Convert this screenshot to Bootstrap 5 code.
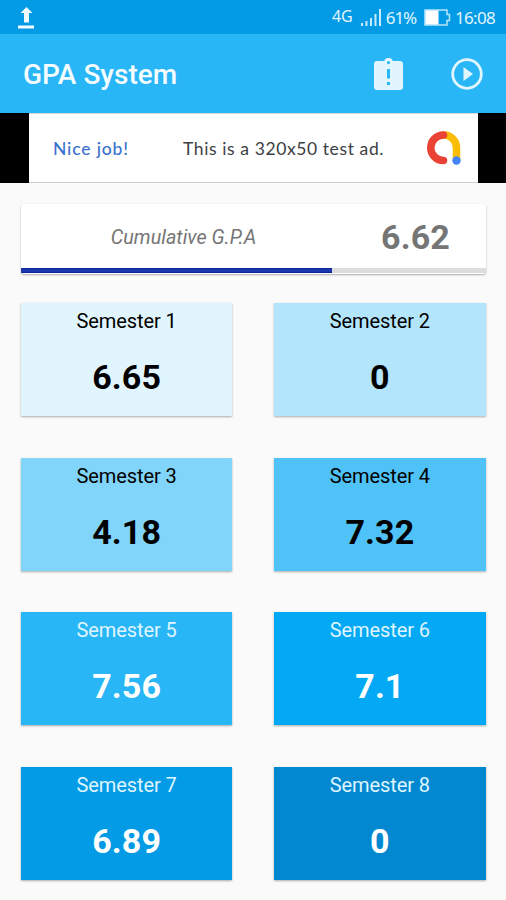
<!DOCTYPE html>
<html lang="en">
<head>
<meta charset="utf-8">
<meta name="viewport" content="width=device-width, initial-scale=1">
<title>GPA System</title>
<link href="https://cdn.jsdelivr.net/npm/bootstrap@5.3.0/dist/css/bootstrap.min.css" rel="stylesheet">
<style>
body { font-family: Roboto, "Liberation Sans", sans-serif; background: #fafafa; height: 900px; color: #000; }
svg { display: block; flex: none; }
.status { height: 34px; background: #039be5; color: #e1f5fe; padding: 1px 11px 0 18px; font: 17px/34px "Noto Sans", sans-serif; }
.status span { white-space: nowrap; }
.net { font-size: 16px; line-height: 31px; align-self: flex-start; }
.pct { letter-spacing: -1.1px; }
.clock { letter-spacing: -.7px; }
.appbar { height: 79px; background: #29b6f6; padding: 0 22px 0 23px; }
.appbar h1 { font-size: 28px; line-height: 32px; font-weight: 500; color: #f4fcff; padding-top: 3px; }
.actions { gap: 47px; }
.ad-strip { height: 70px; background: #000; padding: 0 28px 0 29px; }
.ad { background: #fff; border-top: 1px solid #d5d8da; border-bottom: 1px solid #ccc; font: 17.5px/24px Lato, sans-serif; color: #3c4043; padding: 0 16px 0 24px; }
.ad span { padding-top: 2px; }
.ad-lead { color: #3b72ce; font-weight: 500; width: 130px; letter-spacing: .85px; }
.ad-copy { letter-spacing: .6px; }
.page { padding: 21px 20.5px 0 21px; }
.elevated { box-shadow: 0 1px 2px rgba(0,0,0,.32); border: 0; }
.summary { height: 70px; border-radius: 3px; background: #fff; }
.summary-row { height: 64px; color: #757575; padding-top: 2px; }
.summary-label { width: 325px; font-size: 19.8px; font-style: italic; padding-top: 1px; }
.summary-value { width: 139px; font-size: 34px; font-weight: 700; letter-spacing: .1px; }
.track { height: 5px; background: #dcdcdc; border-radius: 0; }
.track .progress-bar { background: #1a36ad; border: solid #0f2499; border-width: 1px 0; }
.tiles { display: grid; grid-template-columns: 1fr 1fr; gap: 41.7px 42px; margin-top: 29px; }
.tile { height: 113px; border-radius: 0; padding-top: 3px; }
.tile-name { font-size: 20px; line-height: 30px; letter-spacing: -.1px; }
.tile-value { font-size: 34px; line-height: 40px; font-weight: 700; margin-top: 21px; letter-spacing: .1px; }
.s1 { background: #e1f5fe; } .s2 { background: #b3e5fc; }
.s3 { background: #81d4fa; } .s4 { background: #4fc3f7; }
.s5 { background: #29b6f6; } .s6 { background: #03a9f4; }
.s7 { background: #039be5; } .s8 { background: #0288d1; }
.on-dark { color: #fff; }
.on-dark .tile-name { color: #dff5ff; }
</style>
</head>
<body class="overflow-hidden">
<div class="status d-flex align-items-center justify-content-between">
  <svg width="17" height="22" viewBox="0 0 17 22" fill="#f0faff"><path d="M8.500 0 14.500 6H11V15.500H6V6H2.500z"/><path d="M0 18.500H16V21.500H0z"/></svg>
  <div class="d-flex align-items-center">
    <span class="net">4G</span>
    <svg class="ms-2" width="21" height="18" viewBox="0 0 21 18" fill="#c9ecfc"><path d="M0 14h2v3H0zM4.500 12h2v5h-2zM9 9h2v8H9zM13.500 5h2v12h-2zM18 0h2v17h-2z"/></svg>
    <span class="pct ms-1">61%</span>
    <svg class="ms-2 me-1" width="27" height="17" viewBox="0 0 27 17"><path d="M1 1H23V5.500H25.500V11.500H23V16H1z" fill="none" stroke="#b9e6fb" stroke-width="1.500"/><path d="M1.500 1.500H14.500V15.500H1.500z" fill="#fff"/></svg>
    <span class="clock">16:08</span>
  </div>
</div>
<header class="appbar d-flex align-items-center justify-content-between">
  <h1 class="m-0">GPA System</h1>
  <div class="actions d-flex align-items-center">
    <svg width="29" height="32" viewBox="0 0 29 32"><path fill="#e1f5fe" fill-rule="evenodd" d="M3 3H10.200A4.500 4.500 0 0 1 18.800 3H26Q29 3 29 6V29Q29 32 26 32H3Q0 32 0 29V6Q0 3 3 3zM14.500 3A1.600 1.600 0 1 0 14.500 6.200A1.600 1.600 0 1 0 14.500 3zM13 11V20.500H16V11zM13 24V27H16V24z"/></svg>
    <svg width="34" height="34" viewBox="0 0 34 34"><circle cx="17" cy="17" r="14.300" fill="none" stroke="#e1f5fe" stroke-width="2.800"/><path d="M13.500 10V24L23 17z" fill="#e1f5fe"/></svg>
  </div>
</header>
<div class="ad-strip d-flex">
  <div class="ad d-flex align-items-center flex-grow-1">
    <span class="ad-lead">Nice job!</span>
    <span class="ad-copy">This is a 320x50 test ad.</span>
    <svg class="ms-auto" width="36" height="36" viewBox="0 0 36 36" fill="none" stroke-width="7.500" stroke-linecap="round"><path d="M18 5A12.700 12.700 0 0 1 30.500 18V29" stroke="#fbbc04"/><path d="M17.500 5A12.700 12.700 0 0 0 17.500 30.500" stroke="#ea4335"/><circle cx="30.500" cy="30.500" r="4.200" fill="#4285f4"/></svg>
  </div>
</div>
<main class="page">
  <section class="card summary elevated overflow-hidden">
    <div class="summary-row d-flex align-items-center text-center">
      <div class="summary-label"><span>Cumulative G.P.A</span></div>
      <div class="summary-value"><span>6.62</span></div>
    </div>
    <div class="progress track"><div class="progress-bar" style="width:67%"></div></div>
  </section>
  <section class="tiles text-center">
    <div class="card tile elevated s1"><div class="tile-name">Semester 1</div><div class="tile-value">6.65</div></div>
    <div class="card tile elevated s2"><div class="tile-name">Semester 2</div><div class="tile-value">0</div></div>
    <div class="card tile elevated s3"><div class="tile-name">Semester 3</div><div class="tile-value">4.18</div></div>
    <div class="card tile elevated s4"><div class="tile-name">Semester 4</div><div class="tile-value">7.32</div></div>
    <div class="card tile elevated s5 on-dark"><div class="tile-name">Semester 5</div><div class="tile-value">7.56</div></div>
    <div class="card tile elevated s6 on-dark"><div class="tile-name">Semester 6</div><div class="tile-value">7.1</div></div>
    <div class="card tile elevated s7 on-dark"><div class="tile-name">Semester 7</div><div class="tile-value">6.89</div></div>
    <div class="card tile elevated s8 on-dark"><div class="tile-name">Semester 8</div><div class="tile-value">0</div></div>
  </section>
</main>
<script src="https://cdn.jsdelivr.net/npm/bootstrap@5.3.0/dist/js/bootstrap.bundle.min.js"></script>
</body>
</html>
